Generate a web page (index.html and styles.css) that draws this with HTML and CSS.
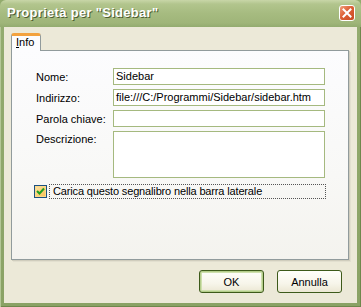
FILE: index.html
```html
<!DOCTYPE html>
<html lang="it">
<head>
  <meta charset="UTF-8" />
  <title>Proprietà per "Sidebar"</title>
  <link rel="stylesheet" href="styles.css">
</head>
<body>

<div class="window">
  <div class="titlebar">
    <span class="title">Proprietà per "Sidebar"</span>
    <span class="close">
      <svg width="10" height="10" viewBox="0 0 10 10"><path d="M1.5 1.5 L8.5 8.5 M8.5 1.5 L1.5 8.5" stroke="#fff" stroke-width="2" stroke-linecap="square" /></svg>
    </span>
  </div>
  <div class="frame">
    <div class="client">
      <div class="tabs">
        <div class="tab"><u>I</u>nfo</div>
      </div>
      <div class="panel">
        <div class="fields">
          <label>Nome:</label>
          <div class="field">Sidebar</div>
          <label>Indirizzo:</label>
          <div class="field">file:///C:/Programmi/Sidebar/sidebar.htm</div>
          <label>Parola chiave:</label>
          <div class="field"></div>
          <label class="top">Descrizione:</label>
          <div class="field area"></div>
        </div>
        <div class="check-row">
          <span class="checkbox">
            <svg width="9" height="9" viewBox="0 0 9 9"><path d="M1 4 L3.5 6.5 L8 1.5" fill="none" stroke="#21a121" stroke-width="2" /></svg>
          </span>
          <span class="check-label">Carica questo segnalibro nella barra laterale</span>
        </div>
      </div>
      <div class="buttons">
        <button class="btn default">OK</button>
        <button class="btn">Annulla</button>
      </div>
    </div>
  </div>
</div>

</body>
</html>
```

FILE: styles.css
```css
body {
  margin: 0;
  padding: 0;
  font-family: 'Liberation Sans', Arial, sans-serif;
  font-size: 11px;
  color: #000;
}
.window {
  width: 361px;
  height: 307px;
  display: flex;
  flex-direction: column;
  background-color: #92ab6d;
}
.titlebar {
  height: 27px;
  box-sizing: border-box;
  display: flex;
  align-items: center;
  justify-content: space-between;
  padding: 0 6px 2px 7px;
  background: linear-gradient(to bottom, #c8d6a8 0%, #b2c58d 15%, #a6bb80 50%, #9fb579 85%, #93ab6f 100%);
  border-radius: 6px 6px 0 0;
}
.title {
  font-weight: bold;
  font-size: 13px;
  color: #fff;
  text-shadow: 1px 1px 0 #4d5d33;
  letter-spacing: 0.3px;
}
.close {
  width: 14px;
  height: 14px;
  border: 1px solid #fff;
  border-radius: 3px;
  background: linear-gradient(135deg, #f0a07e 0%, #dd5f35 45%, #c94a22 100%);
  display: flex;
  align-items: center;
  justify-content: center;
  margin-top: 1px;
}
.frame {
  flex: 1;
  display: flex;
  padding: 0 4px 4px;
  background: linear-gradient(to bottom, #93ab6f, #8aa265);
  box-shadow: inset 1px 0 0 #b4c796, inset -1px 0 0 #6f874c, inset 0 -1px 0 #6f874c;
}
.client {
  flex: 1;
  background-color: #ece9d8;
  padding: 6px 0 0 7px;
  display: flex;
  flex-direction: column;
}
.tabs {
  display: flex;
  height: 17px;
}
.tab {
  width: 30px;
  box-sizing: border-box;
  background-color: #fcfcfe;
  border: 1px solid #919b9c;
  border-top: 3px solid #f3a23e;
  border-bottom: none;
  border-radius: 3px 3px 0 0;
  padding: 0 0 0 4px;
  line-height: 13px;
  font-size: 11px;
  position: relative;
  z-index: 1;
  margin-bottom: -1px;
  height: 18px;
}
.panel {
  width: 338px;
  height: 210px;
  box-sizing: border-box;
  border: 1px solid #919b9c;
  background: linear-gradient(to bottom, #fcfcfe 0%, #f8f8f6 60%, #f4f3ee 100%);
  box-shadow: 1px 1px 0 #d0cdbd, 2px 2px 0 #e2dfcf;
  padding: 17px 0 0 22px;
}
.fields {
  display: grid;
  grid-template-columns: 77px 212px;
  grid-template-rows: 17px 17px 17px 47px;
  row-gap: 4px;
  padding-left: 2px;
}
.fields label {
  align-self: center;
}
.fields label.top {
  align-self: start;
  padding-top: 2px;
}
.field {
  box-sizing: border-box;
  border: 1px solid #a5b97f;
  background-color: #fff;
  padding: 0 2px;
  line-height: 15px;
  white-space: nowrap;
  overflow: hidden;
}
.check-row {
  display: flex;
  align-items: center;
  margin-top: 6px;
  height: 15px;
}
.checkbox {
  width: 11px;
  height: 11px;
  border: 1px solid #1c5180;
  background: linear-gradient(135deg, #fde4a8 0%, #f8c050 100%);
  box-shadow: inset 0 0 0 1px #fbd98a;
  display: flex;
  align-items: center;
  justify-content: center;
}
.check-label {
  margin-left: 2px;
  width: 272px;
  height: 13px;
  border: 1px dotted #555;
  padding-left: 3px;
  line-height: 13px;
  letter-spacing: -0.15px;
}
.buttons {
  display: flex;
  justify-content: flex-end;
  gap: 13px;
  margin-top: 10px;
  padding-right: 15px;
}
.btn {
  width: 65px;
  height: 23px;
  font-family: 'Liberation Sans', Arial, sans-serif;
  font-size: 11px;
  color: #000;
  border: 1px solid #3d5a1a;
  border-radius: 3px;
  background: linear-gradient(to bottom, #fffffb 0%, #f7f5ea 60%, #ebe7d3 100%);
  padding: 0;
}
.btn.default {
  box-shadow: inset 0 0 0 1px #b4cd8a, inset 0 0 0 2px #cfe0ae;
}
```
